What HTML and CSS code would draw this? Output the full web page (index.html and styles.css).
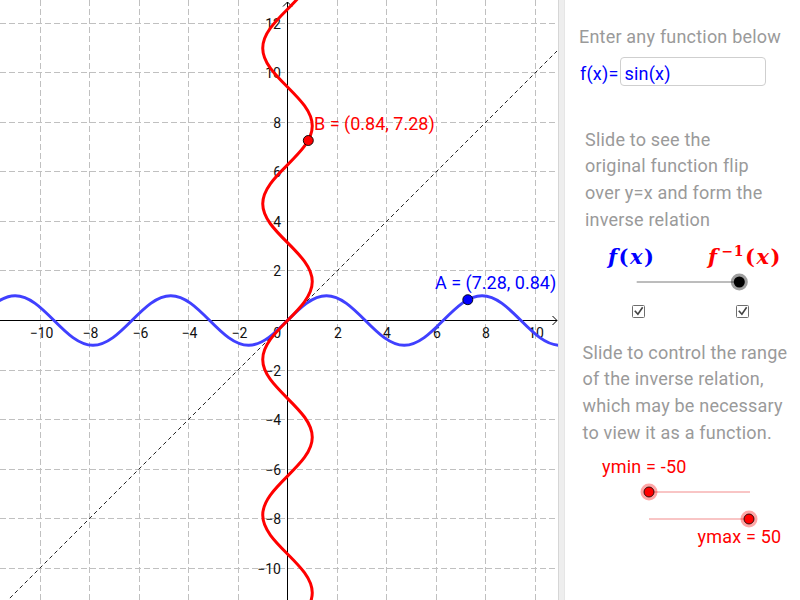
FILE: index.html
```html
<!DOCTYPE html>
<html>
<head>
<meta charset="utf-8">
<link rel="stylesheet" href="styles.css">
</head>
<body>
<div class="app">
  <svg class="graph" width="558" height="600" viewBox="0 0 558 600">
    <path class="grid" d="M40.5 0V600M89.5 0V600M139.5 0V600M188.5 0V600M238.5 0V600M337.5 0V600M386.5 0V600M436.5 0V600M485.5 0V600M535.5 0V600M0 23.5H558M0 72.5H558M0 122.5H558M0 171.5H558M0 221.5H558M0 270.5H558M0 370.5H558M0 419.5H558M0 469.5H558M0 518.5H558M0 568.5H558"/>
    <path class="axis" d="M0 320.5H557M287.5 2V600M552.5 316L557 320.5L552.5 325M283 6.5L287.5 2L292 6.5"/>
    <g class="xlabels">
      <text x="41.5" y="338">−10</text>
      <text x="90.5" y="338">−8</text>
      <text x="140.5" y="338">−6</text>
      <text x="189.5" y="338">−4</text>
      <text x="239.5" y="338">−2</text>
      <text x="338" y="338">2</text>
      <text x="387" y="338">4</text>
      <text x="437" y="338">6</text>
      <text x="486" y="338">8</text>
      <text x="536" y="338">10</text>
    </g>
    <g class="ylabels">
      <text x="281" y="338">0</text>
      <text x="281" y="28.5">12</text>
      <text x="281" y="77.5">10</text>
      <text x="281" y="127.5">8</text>
      <text x="281" y="176.5">6</text>
      <text x="281" y="226.5">4</text>
      <text x="281" y="275.5">2</text>
      <text x="281" y="375.5">−2</text>
      <text x="281" y="424.5">−4</text>
      <text x="281" y="474.5">−6</text>
      <text x="281" y="523.5">−8</text>
      <text x="281" y="573.5">−10</text>
    </g>
    <line class="yx" x1="0" y1="608" x2="557" y2="51"/>
    <path class="curve blue" transform="matrix(24.77 0 0 -24.77 287.5 320.5)" d="M-15.708 0C-15.1957 -0.5123 -14.7057 -1 -14.1372 -1C-13.5687 -1 -13.0787 -0.5123 -12.5664 0C-12.0541 0.5123 -11.5641 1 -10.9956 1C-10.4271 1 -9.9371 0.5123 -9.4248 0C-8.9125 -0.5123 -8.4225 -1 -7.854 -1C-7.2855 -1 -6.7955 -0.5123 -6.2832 0C-5.7709 0.5123 -5.2809 1 -4.7124 1C-4.1439 1 -3.6539 0.5123 -3.1416 0C-2.6293 -0.5123 -2.1393 -1 -1.5708 -1C-1.0023 -1 -0.5123 -0.5123 0 0C0.5123 0.5123 1.0023 1 1.5708 1C2.1393 1 2.6293 0.5123 3.1416 0C3.6539 -0.5123 4.1439 -1 4.7124 -1C5.2809 -1 5.7709 -0.5123 6.2832 0C6.7955 0.5123 7.2855 1 7.854 1C8.4225 1 8.9125 0.5123 9.4248 0C9.9371 -0.5123 10.4271 -1 10.9956 -1C11.5641 -1 12.0541 -0.5123 12.5664 0C13.0787 0.5123 13.5687 1 14.1372 1C14.7057 1 15.1957 0.5123 15.708 0"/>
    <path class="curve red" transform="matrix(0 -24.77 24.77 0 287.5 320.5)" d="M-15.708 0C-15.1957 -0.5123 -14.7057 -1 -14.1372 -1C-13.5687 -1 -13.0787 -0.5123 -12.5664 0C-12.0541 0.5123 -11.5641 1 -10.9956 1C-10.4271 1 -9.9371 0.5123 -9.4248 0C-8.9125 -0.5123 -8.4225 -1 -7.854 -1C-7.2855 -1 -6.7955 -0.5123 -6.2832 0C-5.7709 0.5123 -5.2809 1 -4.7124 1C-4.1439 1 -3.6539 0.5123 -3.1416 0C-2.6293 -0.5123 -2.1393 -1 -1.5708 -1C-1.0023 -1 -0.5123 -0.5123 0 0C0.5123 0.5123 1.0023 1 1.5708 1C2.1393 1 2.6293 0.5123 3.1416 0C3.6539 -0.5123 4.1439 -1 4.7124 -1C5.2809 -1 5.7709 -0.5123 6.2832 0C6.7955 0.5123 7.2855 1 7.854 1C8.4225 1 8.9125 0.5123 9.4248 0C9.9371 -0.5123 10.4271 -1 10.9956 -1C11.5641 -1 12.0541 -0.5123 12.5664 0C13.0787 0.5123 13.5687 1 14.1372 1C14.7057 1 15.1957 0.5123 15.708 0"/>
    <circle class="pt pt-a" cx="467.8" cy="299.7" r="5"/>
    <circle class="pt pt-b" cx="308.3" cy="140.5" r="5"/>
    <text class="lbl lbl-a" x="435" y="289">A = (7.28, 0.84)</text>
    <text class="lbl lbl-b" x="314" y="130">B = (0.84, 7.28)</text>
  </svg>
  <div class="divider"></div>
  <div class="panel">
    <div class="caption">Enter any function below</div>
    <div class="fx-row">
      <span class="fx-label">f(x)=</span>
      <div class="fx-box">sin(x)</div>
    </div>
    <p class="desc desc1">Slide to see the<br>original function flip<br>over y=x and form the<br>inverse relation</p>
    <div class="latex-row">
      <span class="tex tex-f"><i>f</i><b>(</b><i>x</i><b>)</b></span>
      <span class="tex tex-finv"><i>f</i><sup>−1</sup><b>(</b><i>x</i><b>)</b></span>
    </div>
    <svg class="slider slider-flip" width="235" height="18" viewBox="0 0 235 18">
      <line x1="71.7" y1="9" x2="174.3" y2="9" class="track-gray"/>
      <circle cx="174.3" cy="9" r="8.5" class="halo-gray"/>
      <circle cx="174.3" cy="9" r="5.5" class="knob-black"/>
    </svg>
    <svg class="checks" width="235" height="14" viewBox="0 0 235 14">
      <rect x="67.5" y="1.5" width="12" height="12" rx="1" class="cbox"/>
      <path d="M70.3 7.4L72.9 10.3L77.2 3.9" class="cmark"/>
      <rect x="171.5" y="1.5" width="12" height="12" rx="1" class="cbox"/>
      <path d="M174.3 7.4L176.9 10.3L181.2 3.9" class="cmark"/>
    </svg>
    <p class="desc desc2">Slide to control the range<br>of the inverse relation,<br>which may be necessary<br>to view it as a function.</p>
    <div class="ylabel ylabel-min">ymin = -50</div>
    <svg class="slider slider-min" width="235" height="16" viewBox="0 0 235 16">
      <line x1="84" y1="8" x2="185" y2="8" class="track-red"/>
      <circle cx="84" cy="8" r="8.5" class="halo-red"/>
      <circle cx="84" cy="8" r="5" class="knob-red"/>
    </svg>
    <svg class="slider slider-max" width="235" height="16" viewBox="0 0 235 16">
      <line x1="84" y1="8" x2="184" y2="8" class="track-red"/>
      <circle cx="184" cy="8" r="8.5" class="halo-red"/>
      <circle cx="184" cy="8" r="5" class="knob-red"/>
    </svg>
    <div class="ylabel ylabel-max">ymax = 50</div>
  </div>
</div>
</body>
</html>
```
FILE: styles.css
```css
html, body {
  margin: 0;
  padding: 0;
  background: #fff;
}
.app {
  display: flex;
  width: 800px;
  height: 600px;
  overflow: hidden;
  font-family: Roboto, "Liberation Sans", sans-serif;
}
.graph {
  display: block;
  flex: none;
  background: #fff;
}
.grid {
  fill: none;
  stroke: #c0c0c0;
  stroke-width: 1;
  stroke-dasharray: 6 3;
}
.axis {
  fill: none;
  stroke: #000;
  stroke-width: 1;
}
.xlabels text, .ylabels text {
  font-family: Roboto, sans-serif;
  font-size: 14px;
  fill: #111;
}
.xlabels text { text-anchor: middle; }
.ylabels text { text-anchor: end; }
.yx {
  stroke: #222;
  stroke-width: 1;
  stroke-dasharray: 4 3;
}
.curve {
  fill: none;
  stroke-width: 3;
  vector-effect: non-scaling-stroke;
  stroke-linecap: round;
  stroke-linejoin: round;
}
.curve.blue { stroke: #4040ff; }
.curve.red { stroke: #ff0000; }
.pt { stroke: #000; stroke-width: 0.9; }
.pt-a { fill: #0000ff; }
.pt-b { fill: #ff0000; }
.lbl {
  font-family: Roboto, sans-serif;
  font-size: 18px;
}
.lbl-a { fill: #0000ff; }
.lbl-b { fill: #ff0000; }

.divider {
  flex: none;
  width: 5px;
  background: #eeeeee;
  border-left: 1px solid #d6d6d6;
  border-right: 1px solid #e6e6e6;
}
.panel {
  flex: none;
  width: 235px;
  padding-top: 23px;
  font-size: 18px;
  letter-spacing: 0.2px;
}
.caption {
  margin-left: 14px;
  line-height: 27px;
  height: 27px;
  color: #9a9a9a;
  white-space: nowrap;
}
.fx-row {
  display: flex;
  align-items: baseline;
  margin-top: 7px;
  margin-left: 15px;
  color: #0000ff;
}
.fx-label {
  line-height: 21px;
}
.fx-box {
  box-sizing: border-box;
  width: 146px;
  height: 29px;
  margin-left: 1px;
  padding: 5px 4px 1px;
  line-height: 21px;
  border: 1px solid #cfcfcf;
  border-radius: 4px;
}
.desc {
  margin: 0;
  line-height: 26.67px;
  color: #9a9a9a;
  white-space: nowrap;
}
.desc1 {
  margin-top: 40.5px;
  margin-left: 20px;
}
.desc2 {
  margin-top: 21.6px;
  margin-left: 17.5px;
}
.latex-row {
  display: flex;
  height: 24px;
  margin-top: 12px;
  line-height: 24px;
  font-family: "DejaVu Serif", "Liberation Serif", serif;
  font-weight: bold;
  font-size: 21px;
  letter-spacing: 1.5px;
}
.tex i { font-style: italic; }
.tex b { font-weight: bold; font-style: normal; }
.tex-f {
  width: 100px;
  margin-left: 43px;
  color: #0000ff;
}
.tex-finv {
  color: #ff0000;
}
.tex sup {
  font-size: 14px;
  font-style: normal;
  vertical-align: 8px;
  line-height: 0;
  margin: 0 1px 0 3px;
  letter-spacing: 0.5px;
}
.slider, .checks {
  display: block;
  overflow: visible;
}
.slider-flip { margin-top: 4px; }
.checks { margin-top: 13px; }
.track-gray { stroke: #7a7a7a; stroke-width: 1; }
.halo-gray { fill: rgba(0, 0, 0, 0.38); }
.knob-black { fill: #000; }
.cbox { fill: #fff; stroke: #6e6e6e; stroke-width: 1; }
.cmark { fill: none; stroke: #444; stroke-width: 1.6; stroke-linecap: square; }
.ylabel {
  line-height: 20px;
  height: 20px;
  color: #ff0000;
  white-space: nowrap;
}
.ylabel-min {
  margin-top: 10.7px;
  margin-left: 37px;
}
.slider-min { margin-top: 6.5px; }
.slider-max { margin-top: 11.6px; }
.ylabel-max {
  margin-left: 132.5px;
}
.track-red { stroke: #f28b8b; stroke-width: 1; }
.halo-red { fill: rgba(255, 0, 0, 0.35); }
.knob-red { fill: #ff0000; stroke: #000; stroke-width: 0.8; }
```
